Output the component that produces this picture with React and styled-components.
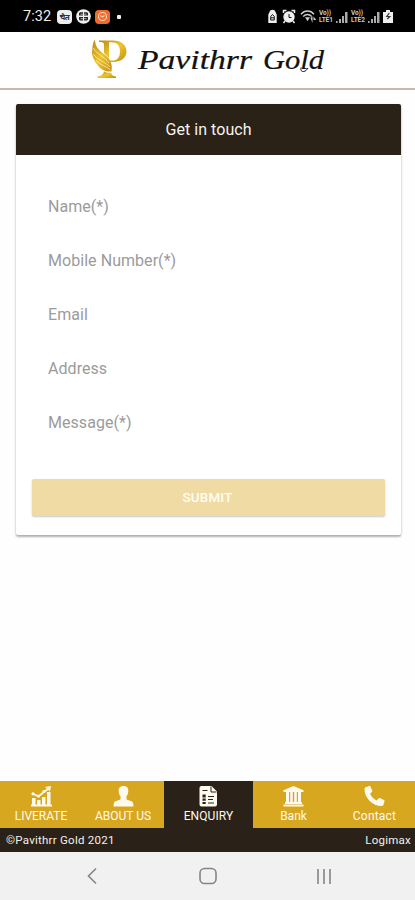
import React, { useState } from 'react'
import styled, { createGlobalStyle } from 'styled-components'

const GlobalStyle = createGlobalStyle`
    * { box-sizing: border-box; }
    body {
        margin: 0;
        background: #fefefe;
        font-family: Roboto, "Liberation Sans", sans-serif;
    }
`

const Screen = styled.div`
    display: flex;
    flex-direction: column;
    height: 900px;
    width: 415px;
    overflow: hidden;
`

const StatusBar = styled.div`
    display: flex;
    align-items: center;
    justify-content: space-between;
    flex: none;
    height: 32px;
    padding: 1px 22px 0 23px;
    background: #000;
    color: #eee;
`

const StatusGroup = styled.div`
    display: flex;
    align-items: center;
    gap: ${props => props.$gap}px;
`

const Clock = styled.span`
    width: 30px;
    font-size: 14.5px;
    letter-spacing: 0.1px;
    white-space: nowrap;
`

const AppChip = styled.span`
    display: flex;
    align-items: center;
    justify-content: center;
    width: 15px;
    height: 14px;
    border-radius: 4px;
    background: ${props => props.$bg || '#eee'};
    color: #333;
    font: bold 8px "Noto Sans", sans-serif;
    letter-spacing: -0.5px;
`

const Dot = styled.span`
    width: 4px;
    height: 4px;
    margin-left: 3px;
    border-radius: 1px;
    background: #eee;
`

const Network = styled.span`
    display: flex;
    flex-direction: column;
    width: 15px;
    font-size: 6.5px;
    font-weight: 700;
    line-height: 7px;
    letter-spacing: -0.1px;
    color: #ccc;
    white-space: nowrap;
`

const Header = styled.header`
    display: flex;
    justify-content: center;
    align-items: flex-start;
    gap: 8px;
    flex: none;
    height: 58px;
    padding: 6px 0 0 2px;
    background: #fff;
    border-bottom: 2px solid #cbb9a8;
`

const Content = styled.main`
    flex: 1;
    padding: 14px 14px 0 16px;
`

const Card = styled.section`
    height: 431px;
    border-radius: 2px;
    background: #fff;
    box-shadow: 0 2px 2px rgba(0, 0, 0, 0.24), 0 1px 3px rgba(0, 0, 0, 0.14);
`

const CardTitle = styled.h1`
    display: flex;
    align-items: center;
    justify-content: center;
    height: 51px;
    margin: 0;
    border-radius: 2px 2px 0 0;
    background: #2a2117;
    color: #f6f3ef;
    font-size: 16px;
    font-weight: 400;
    letter-spacing: 0.05px;
`

const Form = styled.form`
    display: flex;
    flex-direction: column;
    padding: 24px 16px 0;
`

const Field = styled.label`
    display: flex;
    align-items: center;
    height: 54px;
    padding-left: 16px;
    color: #9b9b9b;
    font-size: 16px;
    letter-spacing: 0.05px;
`

const SubmitButton = styled.button`
    height: 37px;
    margin-top: 30px;
    padding: 0 2px 1px 0;
    border: 0;
    border-radius: 2px;
    background: #efdba3;
    box-shadow: 0 1px 2px rgba(0, 0, 0, 0.22);
    color: #fffdf6;
    font: 500 13.4px Roboto, sans-serif;
    letter-spacing: 0.2px;
`

const Tabs = styled.nav`
    display: grid;
    grid-template-columns: 82px 82px 89px 81px 81px;
    flex: none;
    height: 47px;
    background: #d8a720;
`

const Tab = styled.button`
    display: flex;
    flex-direction: column;
    align-items: center;
    gap: 1px;
    padding: 4px 0 0;
    border: 0;
    background: ${props => (props.$active ? '#2a2118' : 'transparent')};
    color: #fffaf0;
    font: 12px/17px Roboto, sans-serif;
    letter-spacing: ${props => props.$spacing || 0}px;
    white-space: nowrap;

    svg {
        flex: none;
    }
`

const Footer = styled.footer`
    display: flex;
    justify-content: space-between;
    flex: none;
    height: 24px;
    padding: 0 4px 0 6px;
    background: #2a2118;
    color: #f4f1ed;
    font-size: 11.5px;
    line-height: 24px;
    letter-spacing: 0.25px;
`

const SystemNav = styled.div`
    display: grid;
    grid-template-columns: repeat(3, 116px);
    justify-content: center;
    justify-items: center;
    align-items: center;
    flex: none;
    height: 48px;
    background: #f1f1f1;
`

const BrandText = styled.text`
    font-family: "Liberation Serif", serif;
    font-style: italic;
    font-size: 27px;
    fill: #111;
    stroke: #111;
    stroke-width: 0.2px;
`

const Logo = () => (
    <svg width="38" height="42" viewBox="0 0 38 42">
        <defs>
            <linearGradient id="gold" x1="0" y1="0" x2="1" y2="1">
                <stop offset="0" stopColor="#b98613" />
                <stop offset="0.5" stopColor="#edc52d" />
                <stop offset="1" stopColor="#c18c14" />
            </linearGradient>
        </defs>
        <path fillRule="evenodd" fill="url(#gold)" d="M9 2.5H23C31 2.5 36.5 7 36.5 13.2C36.5 20 30.5 24 23 24H20V22.5H22C27.5 22.5 30 19 30 13.2C30 7.5 27 4.2 21.5 4.2H19V20L14 15V6.5C14 4.5 12.5 4 9 4Z" />
        <path fill="url(#gold)" d="M5 1.5C5 8 8.5 12 14 16C20 20.5 22.8 25 21.5 33.5C16 34 11 32 7.5 27C4 22.5 1.2 17 2.2 12C2.5 8 2.8 4 5 1.5Z" />
        <path fill="none" stroke="#fff3af" strokeWidth="0.8" d="M3.5 10C6 16 14 18 19 25M3.5 16C7 22 14 23 20 29M6 22.5C10 27 16 28 20.5 32" />
        <path fill="url(#gold)" d="M14 33.5C17 35 19 35 21 34.5C21.5 36.8 23 38 26 38.5V40H7.5V38.5C11 38 13.5 36.5 14 33.5Z" />
    </svg>
)

const BrandName = () => (
    <svg width="191" height="40" viewBox="0 0 191 40">
        <BrandText x="2" y="31" textLength="114" lengthAdjust="spacingAndGlyphs">Pavithrr</BrandText>
        <BrandText x="127" y="31" textLength="61" lengthAdjust="spacingAndGlyphs">Gold</BrandText>
        <path d="M165 29.5c-.5 3 .5 4.3 2.7 4c2-.3 3.3-1.8 4.3-3.6" fill="none" stroke="#111" strokeWidth="1" />
    </svg>
)

const Signal = () => (
    <svg width="13" height="13" viewBox="0 0 13 13" fill="#aaa">
        <path d="M0 11h1.5v2H0zM3 9h2v4H3zM6 6h2v7H6zM9 2h2.5v11H9z" />
    </svg>
)

const PhoneStatus = () => (
    <StatusBar>
        <StatusGroup $gap={4}>
            <Clock>7:32</Clock>
            <AppChip>चैत</AppChip>
            <svg width="15" height="15" viewBox="0 0 15 15">
                <circle cx="7.5" cy="7.5" r="7.3" fill="#eee" />
                <path fill="#222" d="M4 3.3h3v3.3H3V4.3zM8 3.3h3l1 1v2.3H8zM3 8h4v3.5H4L3 10.5zM8 8h4v2.5l-1 1H8z" />
                <path stroke="#eee" strokeWidth="0.7" d="M4.5 5.2h6M4.5 9.7h6" />
            </svg>
            <AppChip $bg="#f36b29">
                <svg width="11" height="11" viewBox="0 0 11 11" fill="none" stroke="#ffd5bf" strokeWidth="1.1">
                    <circle cx="5.5" cy="5.5" r="4" />
                    <path d="M3.2 4.5L5.5 6l2-1.5" />
                </svg>
            </AppChip>
            <Dot />
        </StatusGroup>
        <StatusGroup $gap={2}>
            <svg width="49" height="15" viewBox="0 0 49 15">
                <path fill="#eee" d="M.3 5.5L1.5 3C2 0 7 0 7.5 3l1.2 2.5V14H.3z" />
                <path fill="none" stroke="#111" d="M2.7 11V7.5l1.8-2 1.8 2V11zM3 8.8h3" />
                <circle cx="21" cy="8" r="5.7" fill="#eee" />
                <path fill="none" stroke="#eee" strokeWidth="1.5" d="M15.5 4V1.5h3M23.5 1.5h3V4M17 12l-1.5 2M25 12l1.5 2" />
                <path fill="none" stroke="#111" d="M21 5v3.5h2.5" />
                <g fill="none" stroke="#ccc" strokeWidth="1.4">
                    <path d="M33 5.2C36.5 1 42.5 1 46 5.2M35.2 7.5c2.5-2.7 6-2.7 8.5 0" />
                </g>
                <path fill="#ccc" d="M37 8.2h5l-2.5 4zM42.5 9l2-1.8V14zM45.5 7.5l2.8 3.5h-2.8z" />
            </svg>
            <Network><span>Vo))</span><span>LTE1</span></Network>
            <Signal />
            <Network><span>Vo))</span><span>LTE2</span></Network>
            <Signal />
            <svg width="10" height="13" viewBox="0 0 10 13">
                <path fill="#eee" d="M3 0h4v2h3v11H0V2h3z" />
                <path fill="none" stroke="#333" strokeWidth="1.2" d="M6.3 3L3.8 6.5h3L4.3 9" />
            </svg>
        </StatusGroup>
    </StatusBar>
)

const icons = {
    rate: (
        <>
            <path d="M1 20v-7h3.5v7zM6 20v-5h3.5v5zM11 20v-8h3.5v8zM16 20V7h3.5v13zM0 19.5h21v2H0z" />
            <path d="M1.5 8.5l6 3 6-5L18 3.2" fill="none" stroke="currentColor" strokeWidth="1.7" />
            <circle cx="2" cy="8.8" r="1.6" />
            <circle cx="7.5" cy="11" r="1.6" />
            <circle cx="13" cy="6.5" r="1.6" />
            <path d="M14 2l6-1-1 5.5z" />
        </>
    ),
    person: (
        <>
            <path d="M10.5 1C14 1 15.5 3.2 15.3 6.2C15.1 10 13 13 10.5 13S5.9 10 5.7 6.2C5.5 3.2 7 1 10.5 1z" />
            <path d="M7.5 12h6v2.5l5 1.7c1.3.6 2 2 2 5.3H.5c0-3.3.7-4.7 2-5.3l5-1.7z" />
        </>
    ),
    form: (
        <>
            <path d="M3.5 1h10L19 6.5v13a2 2 0 0 1-2 2H3.5a2 2 0 0 1-2-2V3a2 2 0 0 1 2-2z" />
            <path d="M13 1.5V7h5.5" fill="none" stroke="#2a2118" />
            <path d="M4.5 5.5h5M10 11.5h6M10 14.5h5M10 18h6" fill="none" stroke="#2a2118" strokeWidth="1.2" />
            <path d="M4.5 9.5h3.2v3H4.5zM4.5 13.5h3.2v2.3H4.5zM4.5 17h3.2v2H4.5z" fill="#2a2118" />
        </>
    ),
    bank: (
        <path d="M10.5 1L20.5 5.2V7H.5V5.2zM3 7h3v10H3zM7.2 7h2.6v10H7.2zM11.2 7h2.6v10h-2.6zM15 7h3v10h-3zM2 17h17v2H2zM.5 19.6h20v2H.5z" />
    ),
    phone: (
        <path d="M1.2 2.5L5.2.9c.6-.2 1.1 0 1.3.6l1.7 4.1c.2.5.1 1-.3 1.3L6 8.7c1.4 3 3.7 5.3 6.7 6.7l1.8-2c.4-.4.8-.5 1.3-.3l4.1 1.8c.6.2.8.7.6 1.3l-1.1 3.7c-.2.7-.7 1.1-1.4 1.1C8.4 21 .5 13 .5 3.7c0-.6.2-1 .7-1.2z" />
    ),
}

const tabs = [
    { label: 'LIVERATE', icon: 'rate', spacing: 0 },
    { label: 'ABOUT US', icon: 'person', spacing: 0 },
    { label: 'ENQUIRY', icon: 'form', spacing: 0.1 },
    { label: 'Bank', icon: 'bank', spacing: 0 },
    { label: 'Contact', icon: 'phone', spacing: 0.2 },
]

const fields = ['Name(*)', 'Mobile Number(*)', 'Email', 'Address', 'Message(*)']

const App = () => {
    const [active, setActive] = useState('ENQUIRY')

    return (
        <Screen>
            <GlobalStyle />
            <PhoneStatus />
            <Header>
                <Logo />
                <BrandName />
            </Header>
            <Content>
                <Card>
                    <CardTitle>Get in touch</CardTitle>
                    <Form>
                        {fields.map(field => (
                            <Field key={field}>{field}</Field>
                        ))}
                        <SubmitButton type="button">SUBMIT</SubmitButton>
                    </Form>
                </Card>
            </Content>
            <Tabs>
                {tabs.map(tab => (
                    <Tab
                        key={tab.label}
                        $active={active === tab.label}
                        $spacing={tab.spacing}
                        onClick={() => setActive(tab.label)}
                    >
                        <svg width="21" height="22" viewBox="0 0 21 22" fill="currentColor">
                            {icons[tab.icon]}
                        </svg>
                        {tab.label}
                    </Tab>
                ))}
            </Tabs>
            <Footer>
                <span>©Pavithrr Gold 2021</span>
                <span>Logimax</span>
            </Footer>
            <SystemNav>
                <svg width="18" height="18" viewBox="0 0 18 18" fill="none" stroke="#858585" strokeWidth="1.6">
                    <path d="M13 1.5L5.5 9l7.5 7.5" />
                </svg>
                <svg width="18" height="18" viewBox="0 0 18 18" fill="none" stroke="#858585" strokeWidth="1.6">
                    <rect x="1" y="1.5" width="16" height="15" rx="4.5" />
                </svg>
                <svg width="18" height="18" viewBox="0 0 18 18" fill="none" stroke="#858585" strokeWidth="1.6">
                    <path d="M3 2v15M9 2v15M15 2v15" />
                </svg>
            </SystemNav>
        </Screen>
    )
}

export default App
